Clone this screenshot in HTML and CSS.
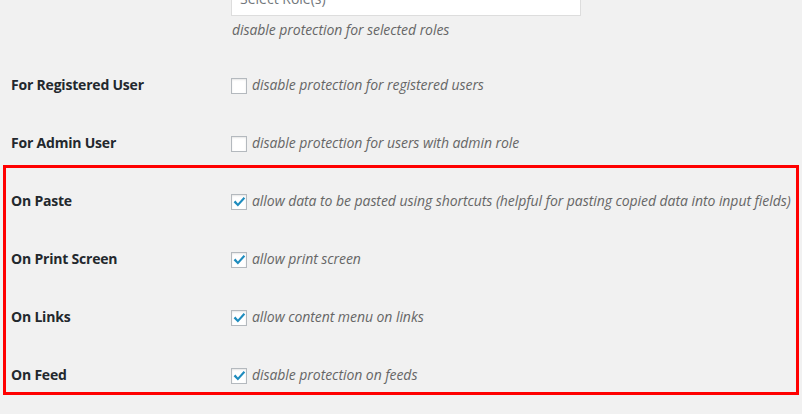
FILE: index.html
```html
<!DOCTYPE html>
<html>
<head>
<meta charset="utf-8">
<link rel="stylesheet" href="styles.css">
</head>
<body>
<div class="page">
  <div class="row row-roles">
    <div class="label">For Roles</div>
    <div class="field">
      <div class="select">Select Role(s)</div>
      <p class="desc">disable protection for selected roles</p>
    </div>
  </div>
  <div class="row">
    <div class="label">For Registered User</div>
    <label class="field check"><span class="cb"></span><span class="desc">disable protection for registered users</span></label>
  </div>
  <div class="row">
    <div class="label">For Admin User</div>
    <label class="field check"><span class="cb"></span><span class="desc">disable protection for users with admin role</span></label>
  </div>
  <div class="highlight">
    <div class="row">
      <div class="label">On Paste</div>
      <label class="field check"><span class="cb on"><svg viewBox="0 0 16 16"><path d="M2.6 8.2 L4.4 6.6 L6.9 9.4 L12.6 3 L14.2 4.6 L6.9 12.6 Z"/></svg></span><span class="desc">allow data to be pasted using shortcuts (helpful for pasting copied data into input fields)</span></label>
    </div>
    <div class="row">
      <div class="label">On Print Screen</div>
      <label class="field check"><span class="cb on"><svg viewBox="0 0 16 16"><path d="M2.6 8.2 L4.4 6.6 L6.9 9.4 L12.6 3 L14.2 4.6 L6.9 12.6 Z"/></svg></span><span class="desc">allow print screen</span></label>
    </div>
    <div class="row">
      <div class="label">On Links</div>
      <label class="field check"><span class="cb on"><svg viewBox="0 0 16 16"><path d="M2.6 8.2 L4.4 6.6 L6.9 9.4 L12.6 3 L14.2 4.6 L6.9 12.6 Z"/></svg></span><span class="desc">allow content menu on links</span></label>
    </div>
    <div class="row last">
      <div class="label">On Feed</div>
      <label class="field check"><span class="cb on"><svg viewBox="0 0 16 16"><path d="M2.6 8.2 L4.4 6.6 L6.9 9.4 L12.6 3 L14.2 4.6 L6.9 12.6 Z"/></svg></span><span class="desc">disable protection on feeds</span></label>
    </div>
  </div>
</div>
</body>
</html>
```
FILE: styles.css
```css
html, body {
  margin: 0;
  padding: 0;
  background: #f1f1f1;
  overflow: hidden;
}
body {
  font-family: "Open Sans", "Noto Sans", sans-serif;
  font-size: 14px;
  color: #23282d;
  width: 802px;
  height: 414px;
}
.page {
  margin-top: -14px;
}
.row {
  display: grid;
  grid-template-columns: 220px 1fr;
  align-items: center;
  height: 58px;
  padding-left: 11px;
}
.row-roles {
  height: 70px;
  align-items: start;
}
.label {
  font-weight: 700;
  line-height: 18px;
  letter-spacing: -0.2px;
}
.field {
  display: flex;
}
.row-roles .field {
  flex-direction: column;
}
.select {
  width: 340px;
  height: 28px;
  box-sizing: content-box;
  border: 1px solid #ddd;
  background: #fff;
  color: #72777c;
  padding-left: 8px;
  line-height: 24px;
}
.row-roles .desc {
  margin: 5px 0 0 1px;
  line-height: 18px;
}
.desc {
  font-style: italic;
  color: #666;
  line-height: 18px;
  white-space: nowrap;
  letter-spacing: -0.06px;
}
.check {
  align-items: center;
  gap: 5px;
}
.cb {
  width: 14px;
  height: 14px;
  border: 1px solid #b4b9be;
  background: #fff;
  box-shadow: inset 0 1px 2px rgba(0,0,0,0.1);
  display: flex;
  align-items: center;
  justify-content: center;
  margin-top: 2px;
  flex: none;
}
.cb svg {
  width: 16px;
  height: 16px;
  fill: #1e8cbe;
  flex: none;
}
.highlight {
  margin: -7px 3px 0 3px;
  border: 3px solid #ff0000;
  padding-top: 4px;
}
.highlight .row {
  padding-left: 5px;
}
.highlight .row.last {
  height: 46px;
  align-items: start;
  padding-top: 20px;
  box-sizing: border-box;
}
```
